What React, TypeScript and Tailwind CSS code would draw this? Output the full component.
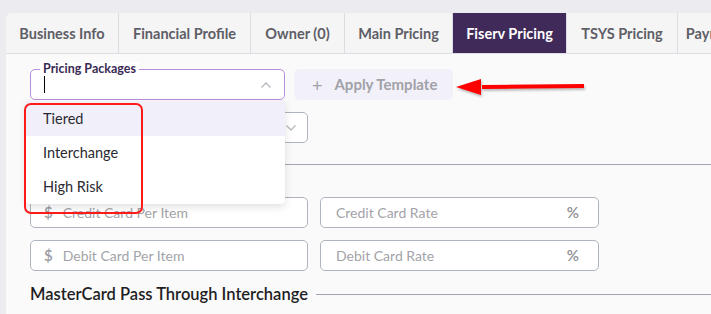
import React from "react";

const tabs = ["Business Info", "Financial Profile", "Owner (0)", "Main Pricing", "Fiserv Pricing", "TSYS Pricing", "Payments"];
const tabW = [113, 132, 94, 108, 114, 111, 80];

function Field({ ph, prefix, suffix }: { ph: string; prefix?: boolean; suffix?: boolean }) {
  return (
    <div className="flex items-center h-[31px] border border-[#aeb4bd] rounded-[5px] bg-white px-[13px] text-[14px] text-[#a3a3a8]">
      {prefix && <span className="mr-[10px] text-[15px] text-[#9a9aa0] font-semibold">$</span>}
      <span className={prefix ? "" : "ml-[2px]"}>{ph}</span>
      {suffix && <span className="ml-auto mr-[6px] text-[15px] text-[#8e8e94] font-semibold">%</span>}
    </div>
  );
}

export default function App() {
  return (
    <div className="w-[711px] h-[314px] overflow-hidden bg-[#ebebf0] pt-[13px] pl-[6px]" style={{ fontFamily: "Lato, 'Noto Sans', sans-serif" }}>
      <div className="relative h-full bg-[#fafafa] rounded-tl-[6px] overflow-hidden">
        <div className="flex h-[41px] bg-[#f5f5f6] border-b border-[#dcdce2]">
          {tabs.map((t, i) => (
            <div
              key={t}
              style={{ width: tabW[i] }}
              className={
                "shrink-0 flex items-center justify-center pt-[1px] text-[14.5px] font-bold whitespace-nowrap border-r border-[#dcdce2] " +
                (t === "Fiserv Pricing" ? "bg-[#3f2a59] text-white" : "text-[#5e5e66]")
              }
            >
              {t}
            </div>
          ))}
        </div>
        <div className="pl-[24px] pt-[15px]">
          <div className="flex gap-[9px] items-center">
            <div className="relative w-[255px] h-[31px] border border-[#b98fdc] rounded-[5px] bg-white flex items-center px-[12px]">
              <span className="absolute -top-[8px] left-[9px] px-[3px] bg-white text-[12.5px] leading-[14px] font-bold text-[#3a2a55]">Pricing Packages</span>
              <span className="w-px h-[17px] bg-black ml-[1px]" />
              <svg className="ml-auto" width="12" height="8" viewBox="0 0 12 8"><path d="M1.5 6.5 6 2l4.5 4.5" fill="none" stroke="#b9b9c0" strokeWidth="1.4" /></svg>
            </div>
            <div className="w-[159px] h-[31px] rounded-[5px] bg-[#f2f1fa] flex items-center pl-[18px] text-[15px] font-bold text-[#a1a1a8]">
              <span className="text-[18px] font-normal mr-[12px] leading-none">+</span>Apply Template
            </div>
          </div>
          <div className="mt-[12px] w-[278px] h-[31px] border border-[#aeb4bd] rounded-[5px] bg-white flex items-center justify-end pr-[10px]">
            <svg width="12" height="8" viewBox="0 0 12 8"><path d="M1.5 1.5 6 6l4.5-4.5" fill="none" stroke="#b9b9c0" strokeWidth="1.4" /></svg>
          </div>
          <div className="mt-[21px] h-px bg-[#a6a2b6]" />
          <div className="mt-[32px] grid grid-cols-[278px_279px] gap-x-[12px] gap-y-[12px]">
            <Field ph="Credit Card Per Item" prefix />
            <Field ph="Credit Card Rate" suffix />
            <Field ph="Debit Card Per Item" prefix />
            <Field ph="Debit Card Rate" suffix />
          </div>
          <div className="mt-[11px] flex items-center gap-[8px]">
            <span className="text-[16.5px] font-semibold text-[#1e1e24] whitespace-nowrap">MasterCard Pass Through Interchange</span>
            <div className="flex-1 h-px bg-[#a6a2b6]" />
          </div>
        </div>

        <div className="absolute left-[20px] top-[88px] w-[259px] bg-white rounded-b-[4px] shadow-[0_3px_8px_rgba(0,0,0,0.12)] text-[14.5px] text-[#2a2a30]">
          <div className="h-[35px] flex items-center pl-[17px] bg-[#f1effa]">Tiered</div>
          <div className="h-[34px] flex items-center pl-[17px]">Interchange</div>
          <div className="h-[34px] flex items-center pl-[17px]">High Risk</div>
        </div>
        <div className="absolute left-[18px] top-[90px] w-[119px] h-[111px] border-2 border-[#ff1a1a] rounded-[7px]" />

        <svg className="absolute left-[448px] top-[63px]" width="134" height="22" viewBox="0 0 134 22" style={{ filter: "drop-shadow(1px 2px 1px rgba(0,0,0,0.25))" }}>
          <path d="M28 9 L130 8 L130 12 L28 13 Z" fill="#ff0000" />
          <path d="M2 11 L27 3 L27 19 Z" fill="#ff0000" />
        </svg>
      </div>
    </div>
  );
}
